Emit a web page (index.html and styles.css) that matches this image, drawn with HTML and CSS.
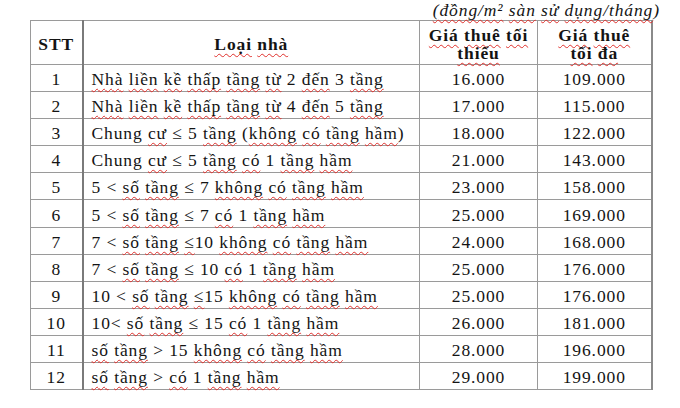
FILE: index.html
```html
<!DOCTYPE html>
<html lang="vi">
<head>
<meta charset="utf-8">
<link rel="stylesheet" href="styles.css">
</head>
<body>
<div class="page">
  <div class="unit"><span class="w">(đồng/m²</span> <span class="w">sàn</span> <span class="w">sử</span> <span class="w">dụng/tháng</span>)</div>
  <table class="rent">
    <colgroup>
      <col class="c-stt"><col class="c-type"><col class="c-min"><col class="c-max">
    </colgroup>
    <thead>
      <tr>
        <th class="stt">STT</th>
        <th><span class="w">Loại</span> <span class="w">nhà</span></th>
        <th><span class="w">Giá</span> <span class="w">thuê</span> <span class="w">tối</span><br><span class="w">thiểu</span></th>
        <th><span class="w">Giá</span> <span class="w">thuê</span><br><span class="w">tối</span> <span class="w">đa</span></th>
      </tr>
    </thead>
    <tbody>
      <tr><td class="stt">1</td><td class="type"><span class="w">Nhà</span> <span class="w">liền</span> <span class="w">kề</span> <span class="w">thấp</span> <span class="w">tầng</span> <span class="w">từ</span> 2 <span class="w">đến</span> 3 <span class="w">tầng</span></td><td class="num">16.000</td><td class="num">109.000</td></tr>
      <tr><td class="stt">2</td><td class="type"><span class="w">Nhà</span> <span class="w">liền</span> <span class="w">kề</span> <span class="w">thấp</span> <span class="w">tầng</span> <span class="w">từ</span> 4 <span class="w">đến</span> 5 <span class="w">tầng</span></td><td class="num">17.000</td><td class="num">115.000</td></tr>
      <tr><td class="stt">3</td><td class="type">Chung <span class="w">cư</span> ≤ 5 <span class="w">tầng</span> (<span class="w">không</span> <span class="w">có</span> <span class="w">tầng</span> <span class="w">hầm</span>)</td><td class="num">18.000</td><td class="num">122.000</td></tr>
      <tr><td class="stt">4</td><td class="type">Chung <span class="w">cư</span> ≤ 5 <span class="w">tầng</span> <span class="w">có</span> 1 <span class="w">tầng</span> <span class="w">hầm</span></td><td class="num">21.000</td><td class="num">143.000</td></tr>
      <tr><td class="stt">5</td><td class="type">5 &lt; <span class="w">số</span> <span class="w">tầng</span> ≤ 7 <span class="w">không</span> <span class="w">có</span> <span class="w">tầng</span> <span class="w">hầm</span></td><td class="num">23.000</td><td class="num">158.000</td></tr>
      <tr><td class="stt">6</td><td class="type">5 &lt; <span class="w">số</span> <span class="w">tầng</span> ≤ 7 <span class="w">có</span> 1 <span class="w">tầng</span> <span class="w">hầm</span></td><td class="num">25.000</td><td class="num">169.000</td></tr>
      <tr><td class="stt">7</td><td class="type">7 &lt; <span class="w">số</span> <span class="w">tầng</span> <span class="w">≤</span>10 <span class="w">không</span> <span class="w">có</span> <span class="w">tầng</span> <span class="w">hầm</span></td><td class="num">24.000</td><td class="num">168.000</td></tr>
      <tr><td class="stt">8</td><td class="type">7 &lt; <span class="w">số</span> <span class="w">tầng</span> ≤ 10 <span class="w">có</span> 1 <span class="w">tầng</span> <span class="w">hầm</span></td><td class="num">25.000</td><td class="num">176.000</td></tr>
      <tr><td class="stt">9</td><td class="type">10 &lt; <span class="w">số</span> <span class="w">tầng</span> <span class="w">≤</span>15 <span class="w">không</span> <span class="w">có</span> <span class="w">tầng</span> <span class="w">hầm</span></td><td class="num">25.000</td><td class="num">176.000</td></tr>
      <tr><td class="stt">10</td><td class="type">10&lt; <span class="w">số</span> <span class="w">tầng</span> ≤ 15 <span class="w">có</span> 1 <span class="w">tầng</span> <span class="w">hầm</span></td><td class="num">26.000</td><td class="num">181.000</td></tr>
      <tr><td class="stt">11</td><td class="type"><span class="w">số</span> <span class="w">tầng</span> &gt; 15 <span class="w">không</span> <span class="w">có</span> <span class="w">tầng</span> <span class="w">hầm</span></td><td class="num">28.000</td><td class="num">196.000</td></tr>
      <tr><td class="stt">12</td><td class="type"><span class="w">số</span> <span class="w">tầng</span> &gt; <span class="w">có</span> 1 <span class="w">tầng</span> <span class="w">hầm</span></td><td class="num">29.000</td><td class="num">199.000</td></tr>
    </tbody>
  </table>
</div>
</body>
</html>
```

FILE: styles.css
```css
html, body {
  margin: 0;
  padding: 0;
  background: #ffffff;
}

.page {
  width: 680px;
  height: 408px;
  font-family: "Liberation Serif", "Times New Roman", serif;
  color: #141414;
  font-size: 17.5px;
  letter-spacing: 0.9px;
}

.unit {
  height: 20px;
  line-height: 20px;
  text-align: right;
  padding-right: 20px;
  font-style: italic;
}

.w {
  text-decoration: underline wavy #e0302c;
  text-decoration-thickness: 1px;
  text-underline-offset: 3px;
  text-decoration-skip-ink: none;
}

.rent {
  margin-left: 30px;
  width: 621px;
  border-collapse: collapse;
  table-layout: fixed;
}

.c-stt { width: 52px; }
.c-type { width: 337px; }
.c-min { width: 118px; }
.c-max { width: 114px; }

.rent th,
.rent td {
  border: 1px solid #9a9a9a;
  padding: 0;
}

.rent th {
  height: 41px;
  font-weight: bold;
  line-height: 18px;
  text-align: center;
  vertical-align: middle;
  padding-top: 2px;
}

.rent td {
  height: 24.1px;
  line-height: 20px;
  vertical-align: middle;
  padding-top: 2px;
}

.rent th:first-child,
.rent td:first-child {
  border-right: 2px solid #7a7a7a;
}

.rent th:last-child,
.rent td:last-child {
  border-right: 2px solid #8a8a8a;
}

.rent .stt {
  text-align: center;
}

.rent .type {
  text-align: left;
  padding-left: 8px;
}

.rent .num {
  text-align: center;
}
```
